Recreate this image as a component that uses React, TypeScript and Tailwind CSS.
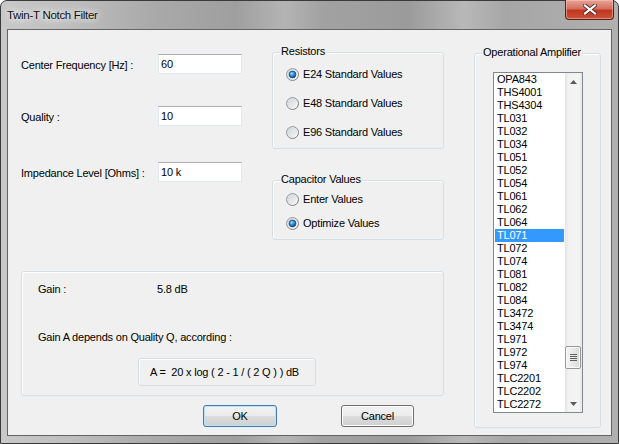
import { useId } from "react";

const amps = [
  "OPA843", "THS4001", "THS4304", "TL031", "TL032", "TL034", "TL051", "TL052", "TL054",
  "TL061", "TL062", "TL064", "TL071", "TL072", "TL074", "TL081", "TL082", "TL084",
  "TL3472", "TL3474", "TL971", "TL972", "TL974", "TLC2201", "TLC2202", "TLC2272",
];

function Radio({ checked, label }: { checked?: boolean; label: string }) {
  const id = useId().replace(/[^a-zA-Z0-9]/g, "");
  return (
    <div className="flex items-center h-[13px] gap-[4px]">
      <svg width="13" height="13" viewBox="0 0 13 13" className="shrink-0">
        <defs>
          <linearGradient id={`o${id}`} x1="0" y1="0" x2="1" y2="1">
            <stop offset="0" stopColor="#a9a9a9" />
            <stop offset="1" stopColor="#747474" />
          </linearGradient>
          <linearGradient id={`i${id}`} x1="0" y1="0" x2="1" y2="1">
            <stop offset="0" stopColor="#cdd0d4" />
            <stop offset="1" stopColor="#fbfbfb" />
          </linearGradient>
          <radialGradient id={`d${id}`} cx="0.4" cy="0.35" r="0.75">
            <stop offset="0" stopColor="#a6e4ff" />
            <stop offset="0.45" stopColor="#2c8ad2" />
            <stop offset="1" stopColor="#0b3b76" />
          </radialGradient>
        </defs>
        <circle cx="6.5" cy="6.5" r="6" fill={`url(#i${id})`} stroke={`url(#o${id})`} />
        {checked && <circle cx="6.5" cy="6.5" r="3.4" fill={`url(#d${id})`} stroke="#1b4a80" strokeWidth="0.8" />}
      </svg>
      <span>{label}</span>
    </div>
  );
}

function Group({ label, className, children }: { label?: string; className?: string; children?: React.ReactNode }) {
  return (
    <div className={"relative rounded-[3px] border border-[#d5dfe5] shadow-[inset_1px_1px_0_#ffffff] " + (className ?? "")}>
      {label && (
        <span className="absolute left-[7px] -top-[8px] bg-[#f0f0f0] px-[1px] leading-[13px]">{label}</span>
      )}
      {children}
    </div>
  );
}

function Field({ label, value, className }: { label: string; value: string; className?: string }) {
  return (
    <div className={"flex items-center h-[20px] " + (className ?? "")}>
      <span className="w-[137px] pt-[2px]">{label}</span>
      <div className="w-[84px] h-[20px] bg-white border border-[#e3e9ef] border-t-[#abadb3] pl-[2px] flex items-center">
        {value}
      </div>
    </div>
  );
}

function Button({ label, focused, className }: { label: string; focused?: boolean; className?: string }) {
  return (
    <div
      className={
        "h-[22px] rounded-[3px] border flex items-center justify-center bg-[linear-gradient(180deg,#f2f2f2_0%,#ebebeb_50%,#dddddd_51%,#cfcfcf_100%)] " +
        (focused
          ? "border-[#3c7fb1] shadow-[inset_0_0_0_1px_#b9e3f6] "
          : "border-[#707070] shadow-[inset_0_0_0_1px_#fcfcfc] ") +
        (className ?? "")
      }
    >
      {label}
    </div>
  );
}

export default function App() {
  return (
    <div className="w-[619px] h-[444px] bg-white font-['Liberation_Sans',Arial,sans-serif] text-[11px] tracking-[-0.2px] text-black">
      <div className="w-full h-full flex flex-col rounded-t-[7px] border border-[#3a3a3a] bg-[linear-gradient(90deg,#c9c9c9_0%,#bdbdbd_12%,#a9a9a9_25%,#9f9f9f_38%,#b4b4b4_46%,#a2a2a2_52%,#9b9b9b_66%,#b8b8b8_75%,#a6a6a6_82%,#b0b0b0_100%)]">
        {/* title bar */}
        <div className="h-[28px] flex items-start justify-between">
          <span className="mt-[7px] ml-[6px] leading-[14px] text-[11.5px] tracking-[-0.3px] text-[#111] [text-shadow:0_0_6px_#ffffff,0_0_10px_#ffffff]">
            Twin-T Notch Filter
          </span>
          <div className="mr-[4px] -mt-[1px] w-[49px] h-[20px] rounded-b-[4px] border border-t-0 border-[#5a2018] bg-[linear-gradient(180deg,#e6a597_0%,#d6705e_45%,#c1371f_55%,#c8533a_100%)] shadow-[inset_0_0_0_1px_rgba(255,200,190,0.5)] flex items-center justify-center">
            <svg width="14" height="11" viewBox="0 0 14 11">
              <path d="M2 1.5 L12 9.5 M12 1.5 L2 9.5" stroke="#5a2a22" strokeWidth="4" strokeLinecap="square" />
              <path d="M2 1.5 L12 9.5 M12 1.5 L2 9.5" stroke="#ffffff" strokeWidth="2.2" strokeLinecap="square" />
            </svg>
          </div>
        </div>

        {/* client */}
        <div className="mx-[6px] mb-[7px] flex-1 border border-[#646464] bg-[#f0f0f0] flex pl-[13px]">
          {/* left area */}
          <div className="w-[423px] flex flex-col">
            <div className="flex pt-[22px]">
              <div className="w-[251px] pt-[2px] flex flex-col">
                <Field label="Center Frequency [Hz] :" value="60" />
                <Field label="Quality :" value="10" className="mt-[32px]" />
                <Field label="Impedance Level [Ohms] :" value="10 k" className="mt-[36px]" />
              </div>
              <div className="w-[172px] flex flex-col">
                <Group label="Resistors" className="h-[97px] pl-[13px] pt-[15px] flex flex-col gap-[16px]">
                  <Radio checked label="E24 Standard Values" />
                  <Radio label="E48 Standard Values" />
                  <Radio label="E96 Standard Values" />
                </Group>
                <Group label="Capacitor Values" className="mt-[31px] h-[60px] pl-[13px] pt-[12px] flex flex-col gap-[11px]">
                  <Radio label="Enter Values" />
                  <Radio checked label="Optimize Values" />
                </Group>
              </div>
            </div>

            <Group className="mt-[31px] h-[125px] pl-[16px] pt-[11px] flex flex-col">
              <div className="flex h-[13px] items-center">
                <span className="w-[119px]">Gain :</span>
                <span>5.8 dB</span>
              </div>
              <div className="mt-[35px] h-[13px] flex items-center">Gain A depends on Quality Q, according :</div>
              <div className="mt-[14px] ml-[100px] w-[178px] h-[28px] rounded-[3px] border border-[#d5dfe5] shadow-[inset_1px_1px_0_#ffffff] pl-[11px] flex items-center whitespace-pre">
                {"A =  20 x log ( 2 - 1 / ( 2 Q ) ) dB"}
              </div>
            </Group>

            <div className="mt-[9px] flex">
              <Button label="OK" focused className="ml-[182px] w-[74px]" />
              <Button label="Cancel" className="ml-[64px] w-[73px]" />
            </div>
          </div>

          {/* op amp group */}
          <Group label="Operational Amplifier" className="ml-[30px] mt-[23px] w-[127px] h-[375px] pl-[18px] pt-[18px]">
            <div className="w-[90px] h-[341px] border border-[#828790] bg-white flex">
              <div className="flex-1 px-[1px] flex flex-col">
                {amps.map((a) => (
                  <div
                    key={a}
                    className={"h-[13px] leading-[13px] pl-[2px] " + (a === "TL071" ? "bg-[#3399ff] text-white" : "")}
                  >
                    {a}
                  </div>
                ))}
              </div>
              <div className="w-[17px] flex flex-col bg-[linear-gradient(90deg,#e3e3e3_0%,#f2f2f2_20%,#f4f4f4_80%,#e8e8e8_100%)]">
                <div className="h-[17px] flex items-center justify-center">
                  <svg width="7" height="4" viewBox="0 0 7 4">
                    <path d="M0 4 L3.5 0 L7 4 Z" fill="#5c5c5c" />
                  </svg>
                </div>
                <div className="flex-1 flex flex-col">
                  <div className="mt-[256px] w-[16px] h-[23px] rounded-[2px] border border-[#979797] bg-[linear-gradient(90deg,#f3f3f3_0%,#e9e9e9_50%,#d8d8d8_100%)] shadow-[inset_0_0_0_1px_#fbfbfb] flex flex-col items-center justify-center gap-[1px]">
                    <div className="w-[7px] h-[1px] bg-[#5f5f5f]" />
                    <div className="w-[7px] h-[1px] bg-[#5f5f5f]" />
                    <div className="w-[7px] h-[1px] bg-[#5f5f5f]" />
                    <div className="w-[7px] h-[1px] bg-[#5f5f5f]" />
                  </div>
                </div>
                <div className="h-[17px] flex items-center justify-center">
                  <svg width="7" height="4" viewBox="0 0 7 4">
                    <path d="M0 0 L3.5 4 L7 0 Z" fill="#5c5c5c" />
                  </svg>
                </div>
              </div>
            </div>
          </Group>
        </div>
      </div>
    </div>
  );
}
